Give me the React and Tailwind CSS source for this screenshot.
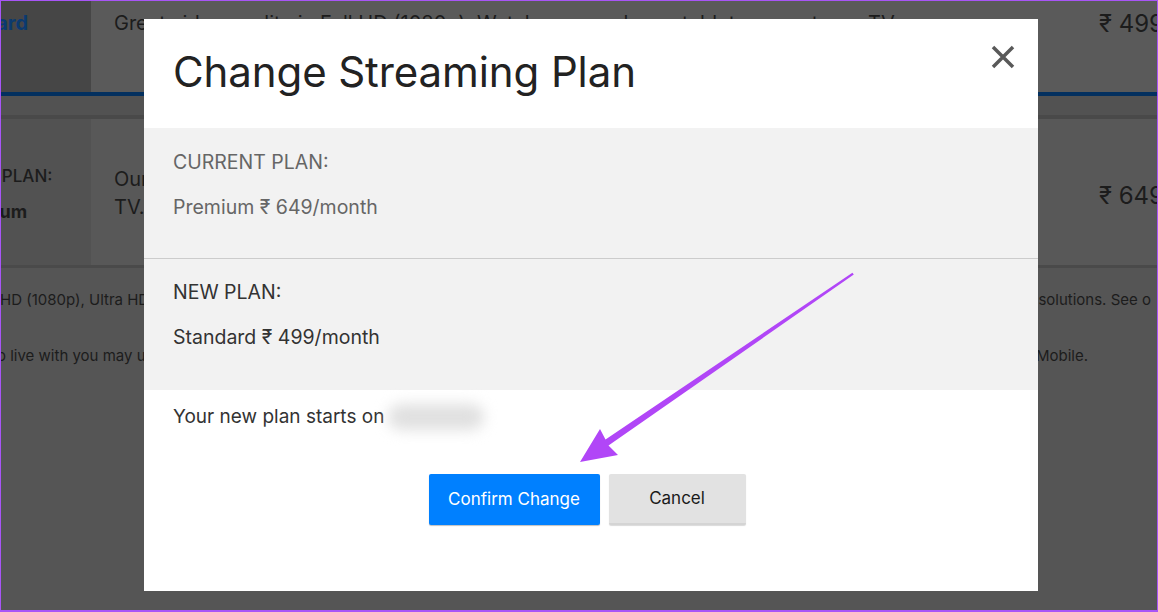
export default function App() {
  const font = { fontFamily: "Inter, 'Noto Sans', sans-serif" };
  return (
    <div
      className="relative w-[1158px] h-[612px] overflow-hidden bg-[#555555] border border-b-2 border-[#a855f7] box-border"
      style={font}
    >
      {/* dimmed background page */}
      <div className="flex h-[91px]">
        <div className="w-[90px] bg-[#464646] overflow-hidden shrink-0">
          <div className="ml-[-62px] mt-[7px] text-[20px] font-bold text-[#0b3a70] whitespace-nowrap">
            Standard
          </div>
        </div>
        <div className="flex-1 bg-[#5a5a5a] flex justify-between overflow-hidden">
          <div className="pl-[23px] mt-[7px] text-[20px] text-[#1c1c1c] whitespace-nowrap">
            Great video quality in Full HD (1080p). Watch on any phone, tablet, computer or TV.
          </div>
          <div className="mt-[5px] mr-[-7px] text-[24px] text-[#1c1c1c] whitespace-nowrap">₹ 499</div>
        </div>
      </div>
      <div className="h-[4px] bg-[#03305f]" />
      <div className="h-[19px] bg-[#525252]" />
      <div className="h-[4px] bg-[#494949]" />
      <div className="flex h-[146px]">
        <div className="w-[90px] bg-[#525252] overflow-hidden shrink-0 flex flex-col">
          <div className="ml-[-85px] mt-[45px] text-[17px] font-medium text-[#1c1c1c] whitespace-nowrap">
            CURRENT PLAN:
          </div>
          <div className="ml-[-52px] mt-[8px] text-[18px] font-bold text-[#1c1c1c] whitespace-nowrap">
            Premium
          </div>
        </div>
        <div className="flex-1 bg-[#585858] flex justify-between overflow-hidden">
          <div className="pl-[23px] mt-[46px] text-[20px] leading-[28px] text-[#1c1c1c]">
            <div>Our best video quality in Ultra HD (4K) and HDR. Watch on any phone, tablet, computer or</div>
            <div>TV.</div>
          </div>
          <div className="mt-[59px] mr-[-7px] text-[24px] text-[#1c1c1c] whitespace-nowrap">₹ 649</div>
        </div>
      </div>
      <div className="h-[3px] bg-[#4a4a4a]" />
      <div className="overflow-hidden whitespace-nowrap text-[15px] text-[#1c1c1c]">
        <div className="flex justify-between mt-[21px]">
          <span className="ml-[-1px]">HD (1080p), Ultra HD (4K) and HDR availability subject to your internet service and device capabilities</span>
          <span className="mr-[6px]">solutions. See o</span>
        </div>
        <div className="flex justify-between mt-[33px]">
          <span className="ml-[-4px]">o live with you may use your account. Watch on 4 different devices at the same time with Premium, 2 with Standard, 1 with Basic and</span>
          <span className="mr-[69px]">Mobile.</span>
        </div>
      </div>

      {/* modal */}
      <div className="absolute left-[143px] top-[18px] w-[894px] h-[572px] bg-white flex flex-col">
        <div className="h-[109px] shrink-0 relative">
          <h1 className="pl-[29px] pt-[28px] text-[42px] leading-[50px] text-[#222222] font-normal tracking-[-0.1px]">
            Change Streaming Plan
          </h1>
          <svg
            className="absolute left-[847px] top-[26px]"
            width="24"
            height="24"
            viewBox="0 0 24 24"
          >
            <path d="M2 2 L22 22 M22 2 L2 22" stroke="#595959" strokeWidth="3.5" strokeLinecap="butt" />
          </svg>
        </div>
        <div className="bg-[#f2f2f2] h-[262px] shrink-0 flex flex-col">
          <div className="h-[131px] px-[29px] pt-[21px] border-b border-[#cccccc] text-[19.5px] text-[#666666]">
            <div className="leading-[26px]">CURRENT PLAN:</div>
            <div className="leading-[26px] mt-[19px]">Premium ₹ 649/month</div>
          </div>
          <div className="flex-1 px-[29px] pt-[20px] text-[19.5px] text-[#333333]">
            <div className="leading-[26px]">NEW PLAN:</div>
            <div className="leading-[26px] mt-[19px]">Standard ₹ 499/month</div>
          </div>
        </div>
        <div className="flex items-center px-[29px] pt-[14px] text-[19px] text-[#333333] leading-[26px]">
          <span>Your new plan starts on</span>
          <span className="ml-[4px] w-[96px] h-[26px] rounded-full bg-[#e0e0e0] blur-[7px]" />
        </div>
        <div className="flex justify-center gap-[9px] mt-[44px] pr-[8px]">
          <button className="w-[171px] h-[51px] bg-[#0080ff] text-white text-[17px] rounded-[2px] shadow-[0_1px_1px_rgba(0,0,0,0.25)]">
            Confirm Change
          </button>
          <button className="w-[137px] h-[51px] bg-[#e2e2e2] text-[#1a1a1a] text-[17px] rounded-[2px] border-b-2 border-[#d4d4d4] shadow-[0_1px_1px_rgba(0,0,0,0.15)]">
            Cancel
          </button>
        </div>
      </div>

      {/* annotation arrow */}
      <svg className="absolute left-0 top-0 pointer-events-none" width="1158" height="612" viewBox="0 0 1158 612">
        <path
          d="M852.8 273.6 L851.4 271.8 L604.5 438.5 L599 428 L579 461 L617 454 L607.5 444.5 Z"
          fill="#b146f7"
        />
      </svg>
    </div>
  );
}
